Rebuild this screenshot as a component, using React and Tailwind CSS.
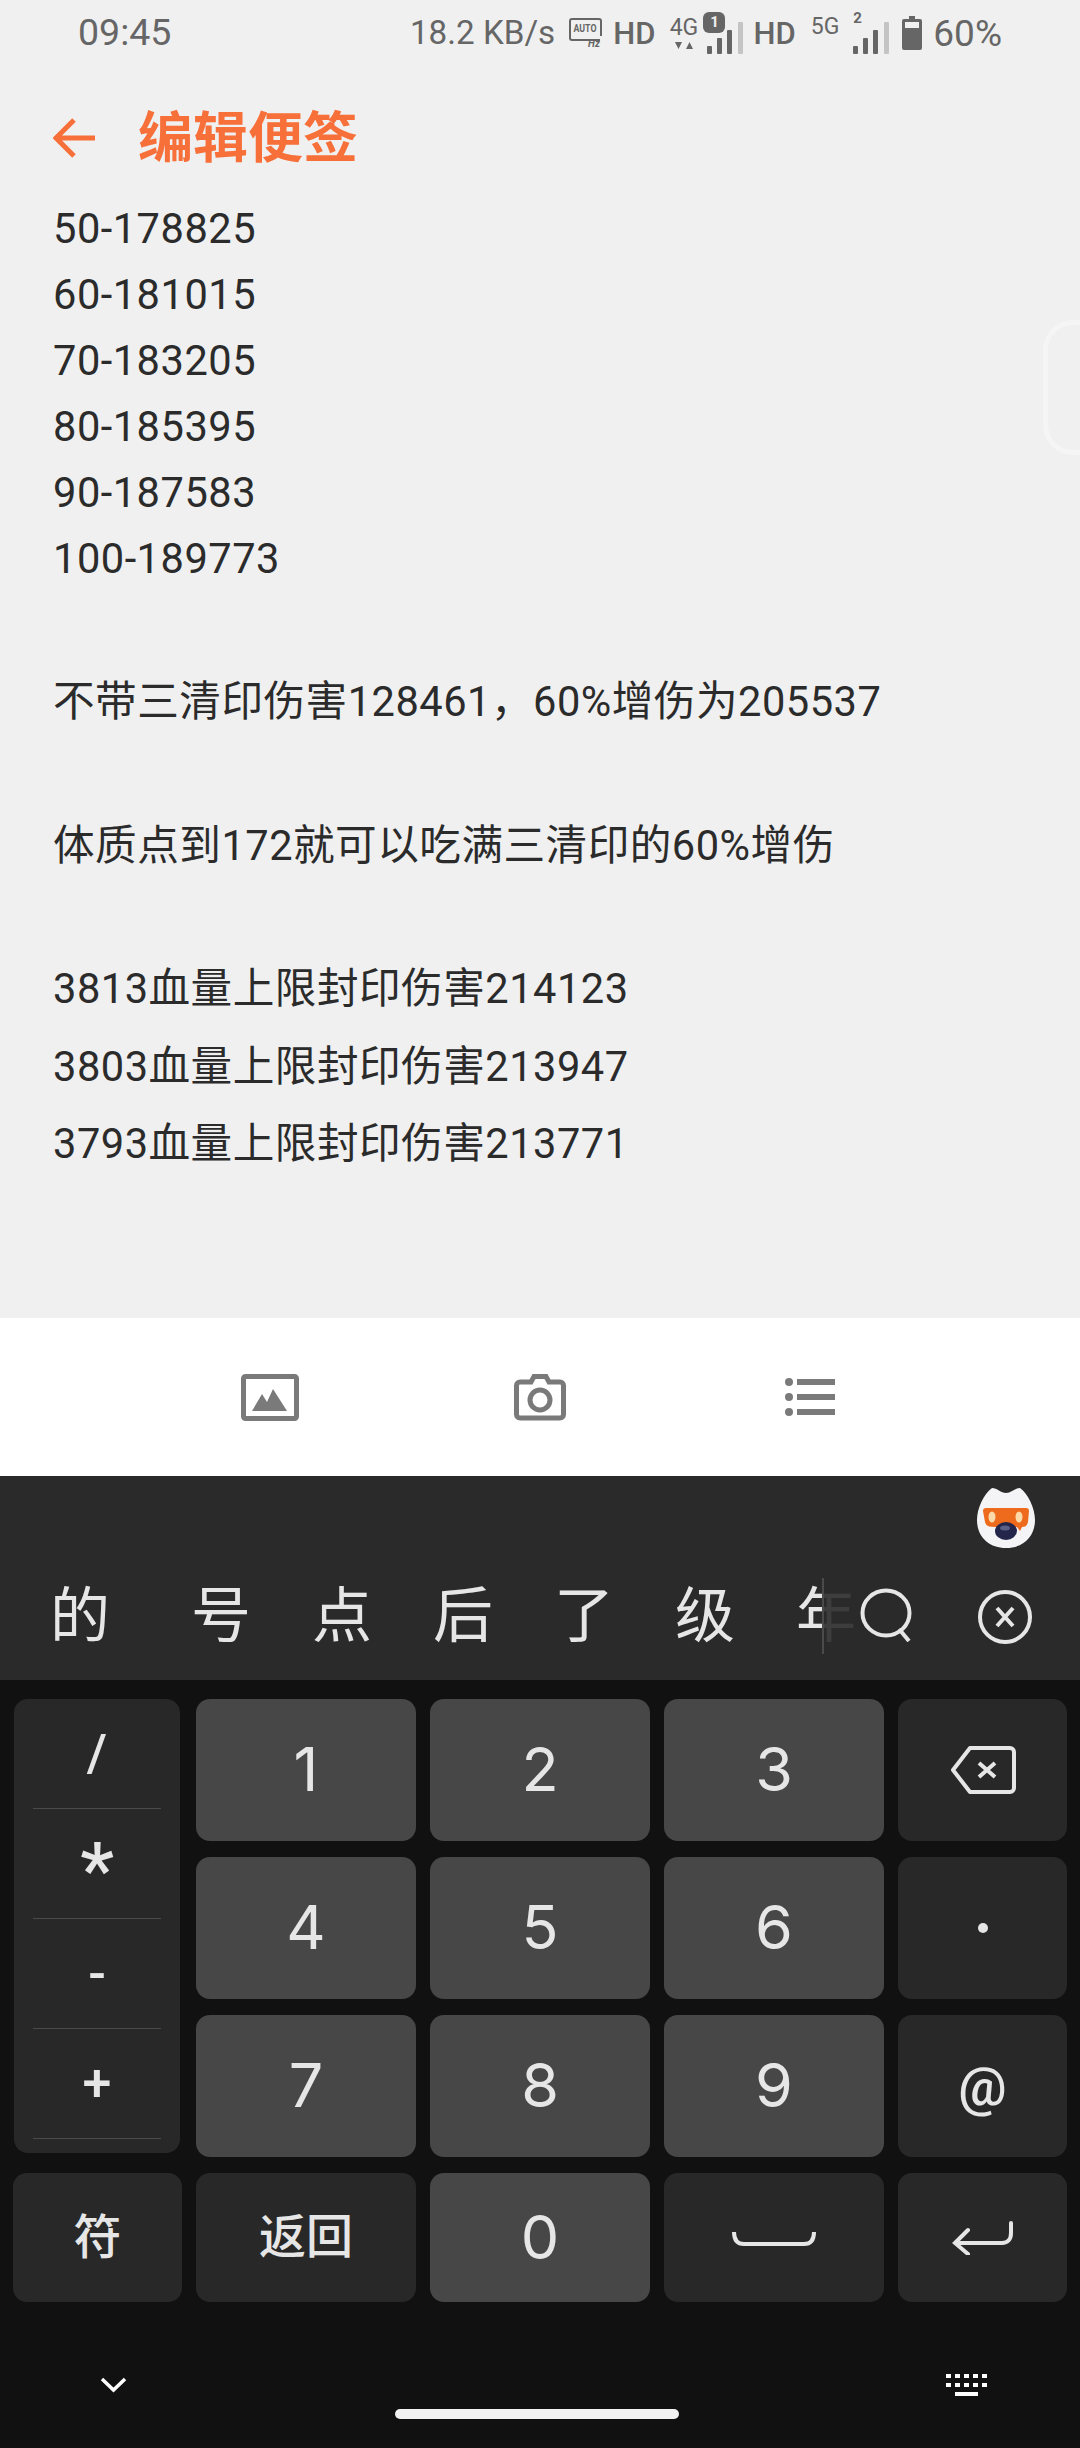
const numberLines = ["50-178825", "60-181015", "70-183205", "80-185395", "90-187583", "100-189773"];

const SignalBars = ({ className }) => (
    <svg viewBox="0 0 36 32" className={className}>
        <rect x="0" y="24" width="5" height="8" rx="1" fill="#666" />
        <rect x="10" y="16" width="5" height="16" rx="1" fill="#666" />
        <rect x="20" y="8" width="5" height="24" rx="1" fill="#666" />
        <rect x="31" y="0" width="5" height="32" rx="1" fill="#c4c4c4" />
    </svg>
);

const StatusBar = () => (
    <div className="h-[66px] shrink-0 flex items-center pl-[78px] pr-[78px] justify-between text-[#666] [font-family:Roboto,sans-serif]">
        <span className="text-[37.5px] leading-none">09:45</span>
        <div className="flex items-center">
            <span className="text-[33.2px] leading-none">18.2 KB/s</span>
            <svg viewBox="0 0 34 30" className="w-[34px] h-[30px] ml-[14px]">
                <path d="M3 1h27a2 2 0 0 1 2 2v15M31 22H3a2 2 0 0 1-2-2V3a2 2 0 0 1 2-2" fill="none" stroke="#666" strokeWidth="2" />
                <text x="16" y="14" fontSize="11" textAnchor="middle" fill="#666" fontFamily="Roboto" fontWeight="700" textLength="23" lengthAdjust="spacingAndGlyphs">AUTO</text>
                <text x="25" y="29" fontSize="10" textAnchor="middle" fill="#666" fontFamily="Roboto" fontWeight="700" fontStyle="italic">Hz</text>
            </svg>
            <span className="ml-[10px] text-[31px] leading-none font-medium">HD</span>
            <div className="ml-[14px] w-[29px] flex flex-col items-center">
                <span className="text-[23px] leading-[20px]">4G</span>
                <svg viewBox="0 0 18 7" className="w-[18px] h-[7px] mt-[4px]">
                    <path d="M0 0h7L3.500 7zM14.500 0 18 7h-7z" fill="#666" />
                </svg>
            </div>
            <div className="relative ml-[9px] w-[36px] h-[32px] mt-[10px]">
                <SignalBars className="w-[36px] h-[32px]" />
                <span className="absolute left-[-4px] top-[-10px] w-[22px] h-[21px] rounded-[6px] bg-[#666] text-[#f0f0f0] text-[15px] leading-[21px] text-center font-bold">1</span>
            </div>
            <span className="ml-[10px] text-[31px] leading-none font-medium">HD</span>
            <span className="ml-[15px] text-[23px] leading-none mb-[14px]">5G</span>
            <div className="relative ml-[14px] w-[36px] h-[32px] mt-[10px]">
                <SignalBars className="w-[36px] h-[32px]" />
                <span className="absolute left-[0px] top-[-11px] text-[15px] leading-none font-bold">2</span>
            </div>
            <svg viewBox="0 0 20 34" className="ml-[13px] w-[20px] h-[34px]">
                <path d="M7 0h6v3h5a2 2 0 0 1 2 2v27a2 2 0 0 1-2 2H2a2 2 0 0 1-2-2V5a2 2 0 0 1 2-2h5z" fill="#666" />
                <rect x="3" y="6" width="14" height="6" fill="#f0f0f0" />
            </svg>
            <span className="ml-[11px] text-[37px] leading-none">60%</span>
        </div>
    </div>
);

const Header = () => (
    <div className="h-[130px] shrink-0 flex items-center pl-[53px] pt-[14px] text-[#f7703a]">
        <svg viewBox="0 0 44 42" className="w-[44px] h-[42px]">
            <path d="M42 21H4M21 3 3 21l18 18" fill="none" stroke="#f7703a" strokeWidth="5" />
        </svg>
        <h1 className="ml-[41px] text-[55px] leading-none font-bold">编辑便签</h1>
    </div>
);

const NoteBody = () => (
    <div className="flex-1 pl-[53px] text-[41.6px] tracking-[0.5px] text-[#2b2b2b] relative">
        {numberLines.map((line) => (
            <div key={line} className="h-[66px] leading-[66px]">{line}</div>
        ))}
        <div className="h-[71px]" />
        <div className="h-[78px] leading-[78px]">不带三清印伤害128461，60%增伤为205537</div>
        <div className="h-[66px]" />
        <div className="h-[78px] leading-[78px]">体质点到172就可以吃满三清印的60%增伤</div>
        <div className="h-[65px]" />
        <div className="h-[78px] leading-[78px]">3813血量上限封印伤害214123</div>
        <div className="h-[77px] leading-[77px]">3803血量上限封印伤害213947</div>
        <div className="h-[77px] leading-[77px]">3793血量上限封印伤害213771</div>
        <div className="absolute right-0 top-[124px] w-[37px] h-[135px] rounded-l-[30px] border-l-[5px] border-y-[5px] border-[#f5f5f5]" />
    </div>
);

const Toolbar = () => (
    <div className="h-[158px] shrink-0 bg-white flex items-center justify-center">
        <div className="w-[270px] flex justify-center">
            <svg viewBox="0 0 58 47" className="w-[58px] h-[47px]">
                <rect x="2.5" y="2.5" width="53" height="42" rx="2" fill="none" stroke="#7a7a7a" strokeWidth="5" />
                <path d="M11 37 21 20l5 8 6-13 14 22z" fill="#7a7a7a" />
            </svg>
        </div>
        <div className="w-[270px] flex justify-center">
            <svg viewBox="0 0 52 47" className="w-[52px] h-[47px]">
                <path d="M17 8 20 2.500h12L35 8h11a3.500 3.500 0 0 1 3.500 3.500v29A3.500 3.500 0 0 1 46 44H6a3.500 3.500 0 0 1-3.500-3.500v-29A3.500 3.500 0 0 1 6 8z" fill="none" stroke="#7a7a7a" strokeWidth="5" />
                <circle cx="26" cy="26" r="10" fill="none" stroke="#7a7a7a" strokeWidth="5" />
            </svg>
        </div>
        <div className="w-[270px] flex justify-center">
            <svg viewBox="0 0 50 40" className="w-[50px] h-[40px]">
                <circle cx="4" cy="5" r="4" fill="#7a7a7a" />
                <circle cx="4" cy="20" r="4" fill="#7a7a7a" />
                <circle cx="4" cy="35" r="4" fill="#7a7a7a" />
                <rect x="12" y="2" width="38" height="6" fill="#7a7a7a" />
                <rect x="12" y="17" width="38" height="6" fill="#7a7a7a" />
                <rect x="12" y="32" width="38" height="6" fill="#7a7a7a" />
            </svg>
        </div>
    </div>
);

const Mascot = () => (
    <svg viewBox="0 0 58 63" className="w-[58px] h-[63px]">
        <path d="M15 3c5 0 9 5 14 5s9-5 14-5c8 6 15 20 15 32 0 17-12 28-29 28S0 52 0 35C0 23 7 9 15 3z" fill="#f4f4f6" />
        <path d="M6 26a3 3 0 0 1 3-3h40a3 3 0 0 1 3 3l-1 11c-1 4-3 5-6 5l-2 4-3-4H18c-6 0-9-1-10-5z" fill="#ee6a1c" />
        <ellipse cx="15" cy="32" rx="3.500" ry="5.500" fill="#fbd9a8" />
        <ellipse cx="42" cy="32" rx="3.500" ry="5.500" fill="#fbd9a8" />
        <ellipse cx="29" cy="46" rx="11" ry="9" fill="#23264a" />
        <ellipse cx="28" cy="43" rx="5" ry="2.500" fill="#5a5f85" />
    </svg>
);

const CandidateBar = () => (
    <div className="h-[204px] shrink-0 bg-[#2a2a2a] relative text-[#e6e6e6]">
        <div className="h-[82px] pt-[9px] pr-[45px] flex justify-end">
            <Mascot />
        </div>
        <div className="h-[122px] flex items-center pb-[4px] overflow-hidden">
            <div className="flex items-center pl-[50px] text-[60px] leading-none whitespace-nowrap">
                <span>的</span>
                <span className="ml-[81px]">号</span>
                <span className="ml-[61px]">点</span>
                <span className="ml-[61px]">后</span>
                <span className="ml-[61px]">了</span>
                <span className="ml-[61px]">级</span>
                <span className="ml-[61px]">年</span>
            </div>
        </div>
        <div className="absolute left-[822px] top-[102px] w-[2px] h-[76px] bg-[#4a4a4a]" />
        <div className="absolute left-[824px] top-[102px] right-0 h-[76px] bg-[#2a2a2a] opacity-90" />
        <svg viewBox="0 0 54 54" className="absolute left-[860px] top-[112px] w-[54px] h-[54px]">
            <ellipse cx="26" cy="25" rx="23.500" ry="22.500" fill="none" stroke="#e6e6e6" strokeWidth="4" />
            <path d="m39 41 10 12" fill="none" stroke="#e6e6e6" strokeWidth="4" />
        </svg>
        <svg viewBox="0 0 54 54" className="absolute left-[978px] top-[114px] w-[54px] h-[54px]">
            <circle cx="27" cy="27" r="25" fill="none" stroke="#e6e6e6" strokeWidth="4" />
            <path d="m19 18 16 18M35 18 19 36" fill="none" stroke="#e6e6e6" strokeWidth="4" />
        </svg>
    </div>
);

const Key = ({ children, dark, className = "" }) => (
    <div className={`h-full flex items-center justify-center rounded-[14px] text-[#e6e6e6] ${dark ? "bg-[#282828]" : "bg-[#474747]"} ${className}`}>
        {children}
    </div>
);

const DigitKey = ({ children }) => (
    <Key className="text-[61px] font-normal [font-family:Inter,sans-serif]">{children}</Key>
);

const SymbolCell = ({ children, className = "text-[52px]" }) => (
    <div className={`h-[110px] flex items-center justify-center border-b border-[#4a4a4a] mx-[19px] leading-none font-medium text-[#e6e6e6] ${className}`}>
        {children}
    </div>
);

const Keyboard = () => (
    <div className="h-[768px] shrink-0 bg-[#111111] relative pt-[19px]">
        <div className="grid grid-cols-[169px_220px_220px_220px_169px] grid-rows-[142px_142px_142px_129px] gap-x-[14px] gap-y-[16px] pl-[13px]">
            <div className="row-span-3 ml-[1px] mr-[2px] h-[454px] rounded-[14px] bg-[#282828]">
                <SymbolCell>/</SymbolCell>
                <SymbolCell className="text-[76px] pt-[12px]">*</SymbolCell>
                <SymbolCell>-</SymbolCell>
                <SymbolCell>+</SymbolCell>
            </div>
            <DigitKey>1</DigitKey>
            <DigitKey>2</DigitKey>
            <DigitKey>3</DigitKey>
            <Key dark>
                <svg viewBox="0 0 66 48" className="w-[66px] h-[48px]">
                    <path d="M20 2h40a4 4 0 0 1 4 4v36a4 4 0 0 1-4 4H20L3 24z" fill="none" stroke="#e6e6e6" strokeWidth="4" strokeLinejoin="round" />
                    <path d="m29 17 16 14M45 17 29 31" fill="none" stroke="#e6e6e6" strokeWidth="4" />
                </svg>
            </Key>
            <DigitKey>4</DigitKey>
            <DigitKey>5</DigitKey>
            <DigitKey>6</DigitKey>
            <Key dark>
                <span className="block w-[10px] h-[10px] rounded-full bg-[#e6e6e6]" />
            </Key>
            <DigitKey>7</DigitKey>
            <DigitKey>8</DigitKey>
            <DigitKey>9</DigitKey>
            <Key dark className="text-[54px] font-medium">@</Key>
            <Key dark className="text-[48px] font-medium">符</Key>
            <Key dark className="text-[47px] font-medium">返回</Key>
            <DigitKey>0</DigitKey>
            <Key dark>
                <svg viewBox="0 0 84 20" className="w-[84px] h-[20px]">
                    <path d="M2 4c0 8 3 12 10 12h60c7 0 10-4 10-12" fill="none" stroke="#e6e6e6" strokeWidth="4" />
                </svg>
            </Key>
            <Key dark>
                <svg viewBox="0 0 64 34" className="w-[64px] h-[34px]">
                    <path d="M60 2v10c0 6-3 10-9 10H4M17 9 4 22l13 11" fill="none" stroke="#e6e6e6" strokeWidth="4" strokeLinecap="round" />
                </svg>
            </Key>
        </div>
        <div className="flex items-center justify-between pl-[100px] pr-[92px] mt-[71px]">
            <svg viewBox="0 0 27 18" className="w-[27px] h-[18px]">
                <path d="m2 3 11.500 11L25 3" fill="none" stroke="#fff" strokeWidth="3.500" />
            </svg>
            <svg viewBox="0 0 42 24" className="w-[42px] h-[24px]">
                <path d="M0 1h5v4H0zM9 1h5v4H9zM18 1h5v4h-5zM27 1h5v4h-5zM36 1h5v4h-5zM0 10h5v4H0zM9 10h5v4H9zM18 10h5v4h-5zM27 10h5v4h-5zM36 10h5v4h-5zM9 19h23v4H9z" fill="#fff" />
            </svg>
        </div>
        <div className="absolute left-[395px] top-[729px] w-[284px] h-[10px] rounded-full bg-[#f2f2f2]" />
    </div>
);

const App = () => (
    <div className="w-[1080px] h-[2448px] flex flex-col overflow-hidden bg-[#f0f0f0] [font-family:Roboto,'Noto_Sans_CJK_SC',sans-serif]">
        <StatusBar />
        <Header />
        <NoteBody />
        <Toolbar />
        <CandidateBar />
        <Keyboard />
    </div>
);

export default App;
